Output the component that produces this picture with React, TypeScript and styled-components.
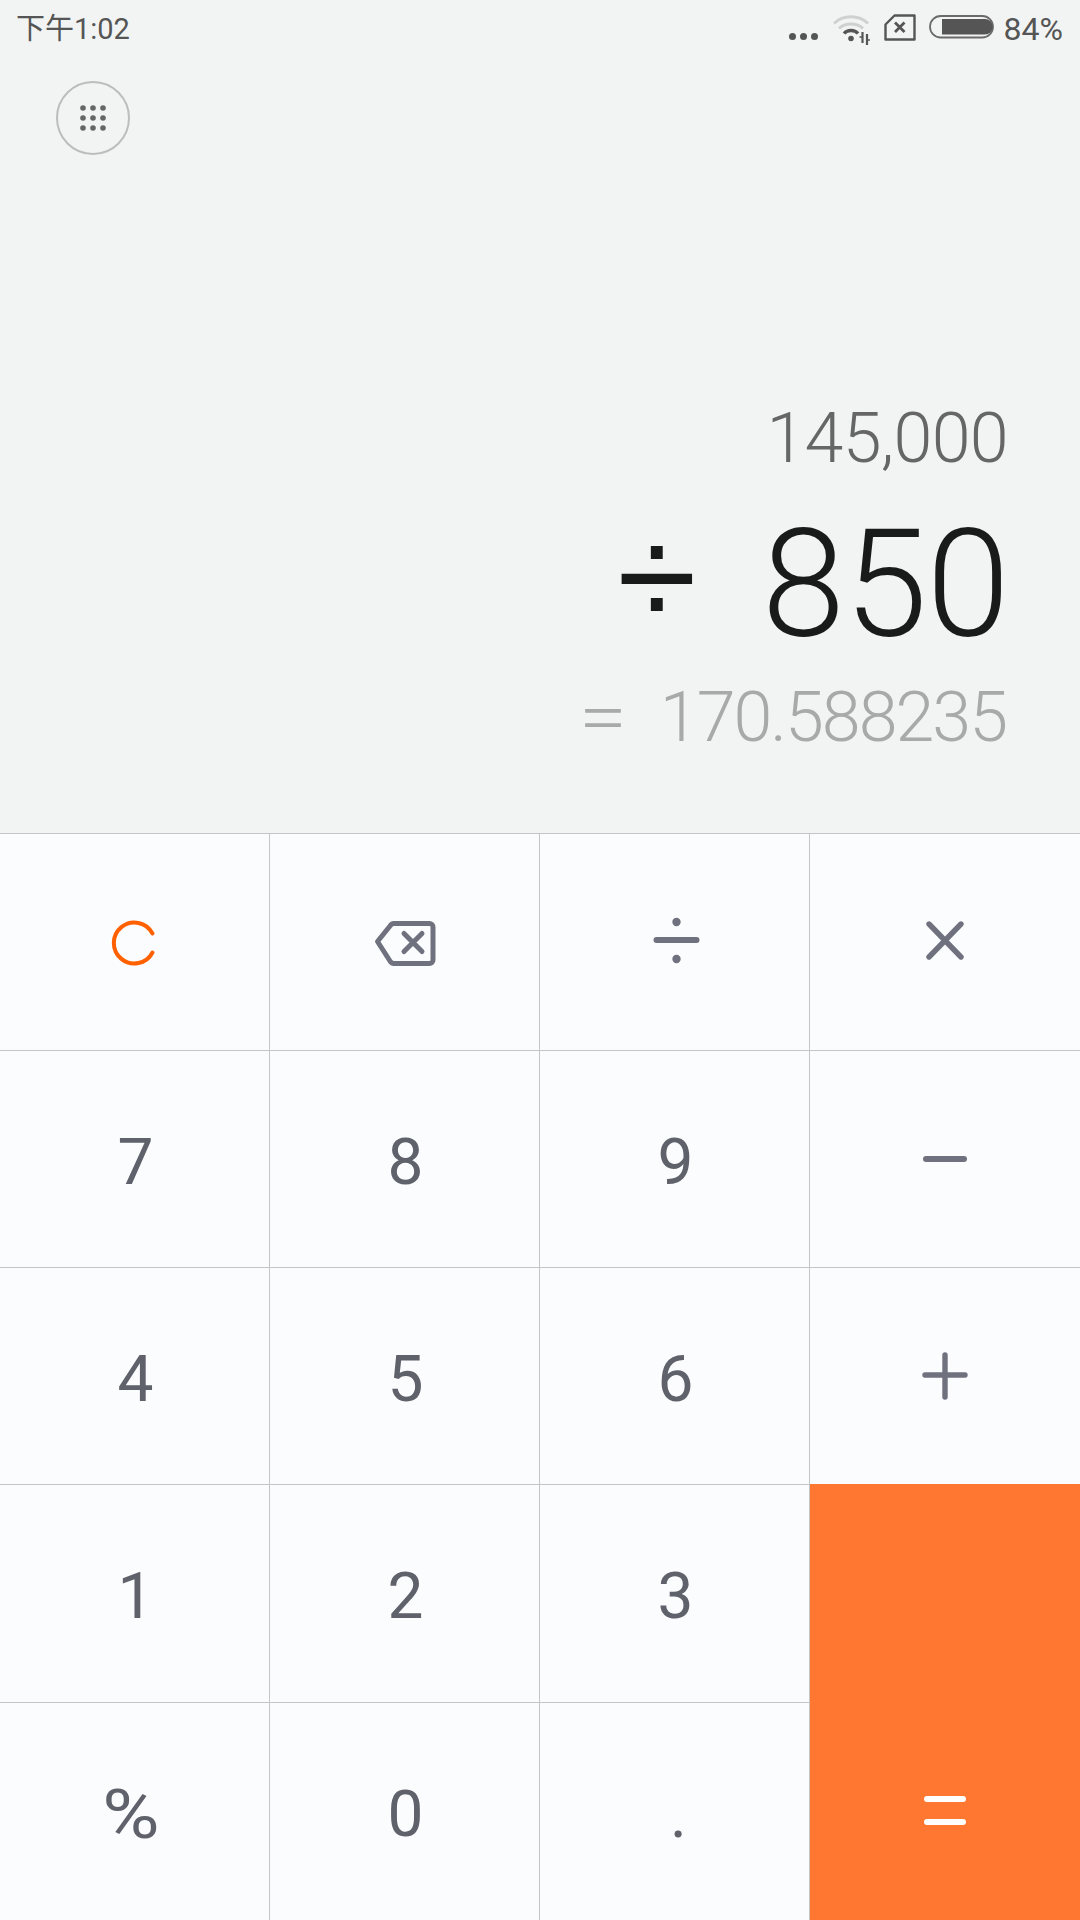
import React from "react";
import styled, { createGlobalStyle } from "styled-components";

const Global = createGlobalStyle`
  html, body { margin: 0; padding: 0; background: #f2f4f3; }
  #root { width: 1080px; height: 1920px; overflow: hidden; }
  * { box-sizing: border-box; }
`;

const Screen = styled.div`
  width: 1080px;
  height: 1920px;
  display: flex;
  flex-direction: column;
  font-family: Roboto, "Noto Sans CJK SC", sans-serif;
`;

const Display = styled.section`
  height: 833px;
  background: #f2f4f3;
  display: flex;
  flex-direction: column;
`;

const StatusBar = styled.header`
  height: 58px;
  padding: 11px 17px 0 16px;
  display: flex;
  align-items: flex-start;
  justify-content: space-between;
  color: #555;
  font-size: 29px;
  line-height: 36px;
`;

const Percentage = styled.span`
  font-size: 32px;
`;

const StatusRight = styled.div`
  display: flex;
  align-items: flex-start;
`;

const StatusIcon = styled.svg<{ $gap: number }>`
  display: block;
  flex: none;
  margin-top: 1px;
  margin-right: ${(p) => p.$gap}px;
`;

const ToolRow = styled.div`
  padding: 23px 0 0 56px;
`;

const RoundButton = styled.button`
  width: 74px;
  height: 74px;
  padding: 0;
  border: 2px solid #bcbdbd;
  border-radius: 50%;
  background: transparent;
  display: flex;
  align-items: center;
  justify-content: center;
`;

const Readout = styled.div`
  flex: 1;
  display: flex;
  flex-direction: column;
  align-items: flex-end;
  justify-content: flex-end;
  padding: 0 73px 72px 0;
  font-weight: 300;
`;

const Line = styled.div<{ $size: number; $color: string; $height: number; $gap: number; $track: number; $nudge: number }>`
  display: flex;
  align-items: baseline;
  justify-content: flex-end;
  gap: ${(p) => p.$gap}px;
  margin-right: ${(p) => p.$nudge}px;
  font-size: ${(p) => p.$size}px;
  line-height: ${(p) => p.$height}px;
  letter-spacing: ${(p) => p.$track}px;
  color: ${(p) => p.$color};
  white-space: nowrap;
`;

const Operator = styled.span`
  display: block;
  font-family: "Liberation Sans", sans-serif;
  font-weight: 400;
  font-size: 145px;
  transform: translateY(-9px);
`;

const ResultSign = styled.span`
  display: block;
  transform: scaleX(1.25);
  transform-origin: right center;
`;

const Keypad = styled.main`
  flex: 1;
  display: grid;
  grid-template-columns: repeat(4, 270px);
  grid-template-rows: 217px 217px 217px 218px 218px;
  background: #fbfcfe;
`;

const Key = styled.button<{ $last?: boolean }>`
  padding: 0;
  border: 0;
  border-top: 1px solid #c4c5c6;
  border-right: ${(p) => (p.$last ? "0" : "1px solid #c4c5c6")};
  background: #fbfcfe;
  display: flex;
  align-items: center;
  justify-content: center;
  font-family: inherit;
  font-size: 64px;
  font-weight: 400;
  line-height: 1;
  color: #5f626b;
`;

const Digit = styled.span<{ $lift?: boolean }>`
  display: block;
  transform: translate(1px, ${(p) => (p.$lift ? 3 : 4)}px);
`;

const Percent = styled.span`
  display: block;
  font-size: 68px;
  transform: translate(-4px, 3px) scaleX(1.15);
`;

const Period = styled.span`
  display: block;
  transform: translate(4px, 4px);
`;

const EqualsKey = styled.button`
  grid-column: 4;
  grid-row: 4 / span 2;
  padding: 218px 0 0;
  border: 0;
  background: #ff7730;
  display: flex;
  align-items: center;
  justify-content: center;
`;

const Icon = styled.svg`
  display: block;
  flex: none;
`;

const INK = "#6f727e";

const OpIcon = ({ children, color = INK }: { children: React.ReactNode; color?: string }) => (
  <Icon width="80" height="80" viewBox="-40 -40 80 80" fill="none" stroke={color} strokeWidth="6" strokeLinecap="round" strokeLinejoin="round">
    {children}
  </Icon>
);

const digits = [
  ["7", "8", "9"],
  ["4", "5", "6"],
];

export default function App() {
  return (
    <Screen>
      <Global />
      <Display>
        <StatusBar>
          <span>下午1:02</span>
          <StatusRight>
            <StatusIcon $gap={14} width="30" height="34" viewBox="0 0 30 34" fill="#555">
              <circle cx="3.5" cy="24.5" r="3.5" />
              <circle cx="14.5" cy="24.5" r="3.5" />
              <circle cx="25.5" cy="24.5" r="3.5" />
            </StatusIcon>
            <StatusIcon $gap={13} width="38" height="34" viewBox="0 0 38 34" fill="none">
              <path d="M1 11.5C10 2.5 26 2.5 35 11.5" stroke="#cfd1d0" strokeWidth="3" />
              <path d="M6 16.5C12 10.5 24 10.5 30 16.5" stroke="#cfd1d0" strokeWidth="3" />
              <path d="M11 21.5C14.5 17.5 21.5 17.5 25 21.5" stroke="#555" strokeWidth="3.4" />
              <circle cx="18" cy="26.5" r="2.8" fill="#555" />
              <path d="M29.5 20v11M34 22v11" stroke="#555" strokeWidth="2.2" />
              <path d="M26.5 25h3M34 28h3" stroke="#555" strokeWidth="1.6" />
            </StatusIcon>
            <StatusIcon $gap={13} width="32" height="34" viewBox="0 0 32 34" fill="none" stroke="#555" strokeWidth="2.4">
              <path d="M1.5 12.5 10.5 3.5H30.5V27.5H1.5Z" strokeLinejoin="round" />
              <path d="M11 10.5 20.5 20M20.5 10.5 11 20" strokeWidth="2.8" />
            </StatusIcon>
            <StatusIcon $gap={9} width="66" height="34" viewBox="0 0 66 34" fill="none">
              <rect x="1" y="4" width="63" height="21.5" rx="10.7" stroke="#6a6a6a" strokeWidth="1.8" />
              <path d="M13 7H56a7.7 7.7 0 0 1 0 15.5H13Z" fill="#555" />
            </StatusIcon>
            <Percentage>84%</Percentage>
          </StatusRight>
        </StatusBar>
        <ToolRow>
          <RoundButton aria-label="更多">
            <Icon width="30" height="30" viewBox="0 0 30 30" fill="#666">
              {[5, 15, 25].map((y) =>
                [5, 15, 25].map((x) => <circle key={`${x}-${y}`} cx={x} cy={y} r="2.8" />)
              )}
            </Icon>
          </RoundButton>
        </ToolRow>
        <Readout>
          <Line $size={70} $color="#666" $height={122} $gap={0} $track={-0.7} $nudge={-1}>145,000</Line>
          <Line $size={150} $color="#191a1a" $height={173} $gap={66} $track={-0.8} $nudge={-2}>
            <Operator>÷</Operator>
            <span>850</span>
          </Line>
          <Line $size={70} $color="#a8a9a9" $height={88} $gap={35} $track={-2} $nudge={1}>
            <ResultSign>=</ResultSign>
            <span>170.588235</span>
          </Line>
        </Readout>
      </Display>
      <Keypad>
        <Key aria-label="清除">
          <OpIcon color="#ff6000">
            <path d="M19.5 -9.5A20.5 20.5 0 1 0 19.5 9.5" strokeWidth="4" transform="translate(-2 1)" />
          </OpIcon>
        </Key>
        <Key aria-label="退格">
          <OpIcon>
            <path
              d="M-27.5 -.5 -15 -16A5 5 0 0 1 -11 -18.5H24.5A3.5 3.5 0 0 1 28 -15V18A3.5 3.5 0 0 1 24.5 21.5H-11A5 5 0 0 1 -15 19Z"
              strokeWidth="5"
            />
            <path d="M-1 -8.5 17 9.5M17 -8.5 -1 9.5" strokeWidth="5" />
          </OpIcon>
        </Key>
        <Key aria-label="除">
          <OpIcon>
            <path d="M-18.5 -2H21.5" />
            <circle cx="1.5" cy="-20" r="4.2" fill={INK} stroke="none" />
            <circle cx="1.5" cy="17" r="4.2" fill={INK} stroke="none" />
          </OpIcon>
        </Key>
        <Key $last aria-label="乘">
          <OpIcon>
            <path d="M-16 -18 16 15M16 -18 -16 15" strokeWidth="5.4" />
          </OpIcon>
        </Key>
        {digits.map((row, i) => (
          <React.Fragment key={i}>
            {row.map((d) => (
              <Key key={d}>
                <Digit>{d}</Digit>
              </Key>
            ))}
            <Key $last aria-label={i === 0 ? "减" : "加"}>
              <OpIcon>
                {i === 0 ? <path d="M-19 0H19" /> : <path d="M-20 -1H20M0 -21V21" strokeWidth="5.4" />}
              </OpIcon>
            </Key>
          </React.Fragment>
        ))}
        <Key><Digit $lift>1</Digit></Key>
        <Key><Digit $lift>2</Digit></Key>
        <Key><Digit $lift>3</Digit></Key>
        <EqualsKey aria-label="等于">
          <OpIcon color="#fff">
            <path d="M-18 -12H18M-18 11H18" />
          </OpIcon>
        </EqualsKey>
        <Key><Percent>%</Percent></Key>
        <Key><Digit $lift>0</Digit></Key>
        <Key><Period>.</Period></Key>
      </Keypad>
    </Screen>
  );
}
